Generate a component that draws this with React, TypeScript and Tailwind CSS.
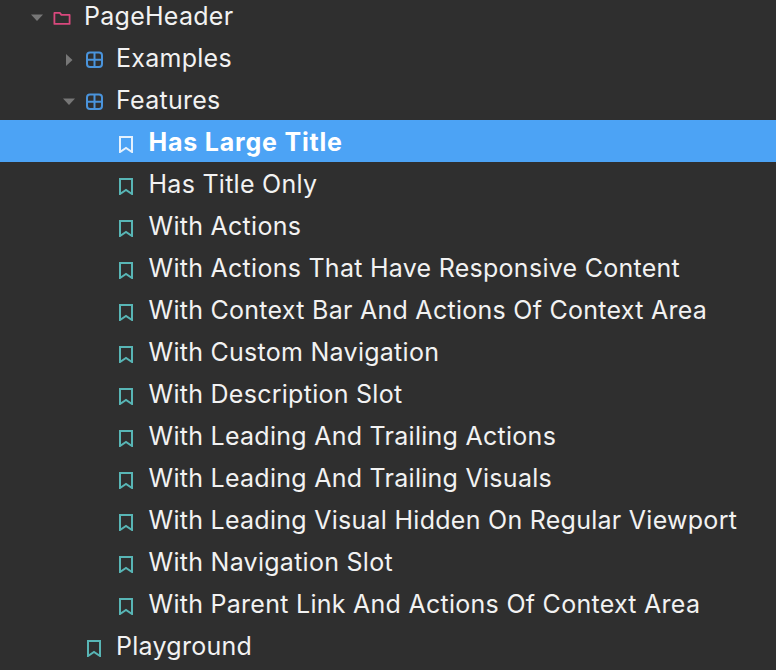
import React from "react";

const Caret = ({ open }: { open: boolean }) => (
  <svg width="14" height="14" viewBox="0 0 14 14" className="block">
    {open ? <path d="M1 4.5h12L7 11z" fill="#777777" /> : <path d="M3 2v12l6.5-6z" fill="#777777" />}
  </svg>
);

const Folder = () => (
  <svg width="20" height="20" viewBox="0 0 20 20" fill="none" stroke="#d9487d" strokeWidth="1.8" strokeLinejoin="round" className="block">
    <path d="M2.4 5.9h5.4l1.6 2h8.2v9H2.4z" />
  </svg>
);

const Grid = () => (
  <svg width="20" height="20" viewBox="0 0 20 20" fill="none" stroke="#4a94dc" strokeWidth="2" className="block">
    <rect x="2" y="3.5" width="15" height="14.4" rx="3" />
    <path d="M9.5 3.5v14.4M2 10.7h15" />
  </svg>
);

const Bookmark = ({ selected }: { selected?: boolean }) => (
  <svg width="16" height="20" viewBox="0 0 16 20" fill="none" stroke={selected ? "#e4f1fd" : "#58b5b5"} strokeWidth="2" strokeLinejoin="miter" className="block">
    <path d="M2 4h12v15l-6-4-6 4z" />
  </svg>
);

const stories = [
  "Has Title Only",
  "With Actions",
  "With Actions That Have Responsive Content",
  "With Context Bar And Actions Of Context Area",
  "With Custom Navigation",
  "With Description Slot",
  "With Leading And Trailing Actions",
  "With Leading And Trailing Visuals",
  "With Leading Visual Hidden On Regular Viewport",
  "With Navigation Slot",
  "With Parent Link And Actions Of Context Area",
];

const Row = ({ children, selected }: { children: React.ReactNode; selected?: boolean }) => (
  <div className={`flex h-[42px] items-center whitespace-nowrap pt-[4px] text-[25px] ${selected ? "bg-[#4ca3f5] font-bold tracking-[0.8px] text-white" : "tracking-[0.27px] text-[#f2f2f2]"}`}>
    {children}
  </div>
);

export default function App() {
  return (
    <div className="h-[670px] w-[776px] overflow-hidden bg-[#2f2f2f] font-['Inter',sans-serif]">
      <div className="-mt-[6px]">
        <Row>
          <span className="ml-[30px] w-[22px]"><Caret open /></span>
          <span className="w-[32px]"><Folder /></span>
          <span>PageHeader</span>
        </Row>
        <Row>
          <span className="ml-[63px] w-[22px]"><Caret open={false} /></span>
          <span className="w-[31px]"><Grid /></span>
          <span>Examples</span>
        </Row>
        <Row>
          <span className="ml-[62px] w-[23px]"><Caret open /></span>
          <span className="w-[31px]"><Grid /></span>
          <span>Features</span>
        </Row>
        <Row selected>
          <span className="ml-[118px] w-[30.5px]"><Bookmark selected /></span>
          <span>Has Large Title</span>
        </Row>
        {stories.map((s) => (
          <Row key={s}>
            <span className="ml-[118px] w-[30.5px]"><Bookmark /></span>
            <span>{s}</span>
          </Row>
        ))}
        <Row>
          <span className="ml-[86px] w-[30px]"><Bookmark /></span>
          <span>Playground</span>
        </Row>
      </div>
    </div>
  );
}
